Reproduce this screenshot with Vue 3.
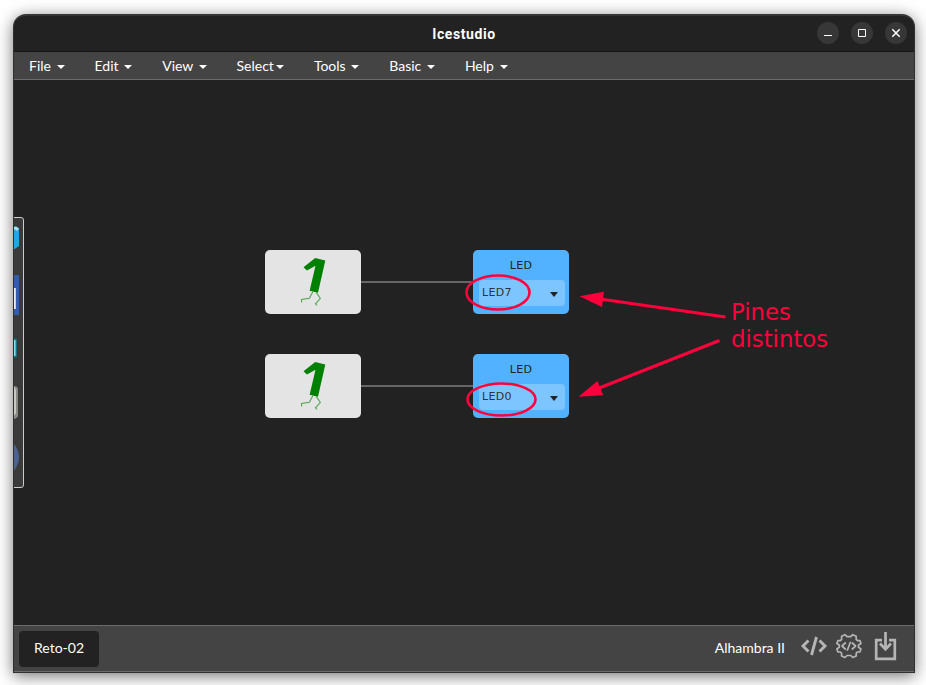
<script setup>
const menus = [
  { name: 'File' },
  { name: 'Edit' },
  { name: 'View' },
  { name: 'Select', tight: true },
  { name: 'Tools' },
  { name: 'Basic' },
  { name: 'Help' },
]
const rows = [
  { id: 'first', pin: 'LED7' },
  { id: 'second', pin: 'LED0' },
]
</script>

<template>
  <div class="desktop">
    <div class="window">
      <header class="titlebar">
        <span class="title">Icestudio</span>
        <div class="controls">
          <button class="control" aria-label="Minimize">
            <svg viewBox="0 0 22 22"><path d="M7 13.5h8" /></svg>
          </button>
          <button class="control" aria-label="Maximize">
            <svg viewBox="0 0 22 22"><path d="M7.500 7.500h7v7h-7z" /></svg>
          </button>
          <button class="control" aria-label="Close">
            <svg viewBox="0 0 22 22"><path class="cross" d="M7.300 7.300l7.400 7.400M14.700 7.300l-7.400 7.400" /></svg>
          </button>
        </div>
      </header>

      <nav class="menubar">
        <a v-for="m in menus" :key="m.name" class="menu" :class="{ tight: m.tight }">
          {{ m.name }}<span class="caret"></span>
        </a>
      </nav>

      <main class="canvas">
        <aside class="toolbox">
          <svg width="10" height="271" viewBox="0 0 10 271">
            <path class="panel" d="M0 .5H7Q9.500 .5 9.500 3V268Q9.500 270.500 7 270.500H0" />
            <path d="M0 10L2 9.500L5 11.500V29L0 32.500Z" fill="#25a5df" />
            <path d="M0 10L2 9.500L5 11.500L3 14L0 12Z" fill="#a0e3f7" />
            <path d="M0 58H5V98H0Z" fill="#315eae" />
            <path d="M0 71H1.800V92H0Z" fill="#eee" />
            <path d="M0 121L3 122V140L0 141Z" fill="#176c87" />
            <path d="M0 123H1.600V139H0Z" fill="#82dcf5" />
            <path d="M0 169Q4 169 4 173V198Q4 201 0 202Z" fill="#8b8b86" />
            <path d="M0 170Q2 171 2 175V196L0 199Z" fill="#c8c8c4" />
            <path d="M0 227Q10 240 0 254Z" fill="#4b6390" />
          </svg>
        </aside>

        <div v-for="row in rows" :key="row.id" class="circuit" :class="row.id">
          <div class="constant">
            <svg width="96" height="64" viewBox="0 0 96 64">
              <path fill="#008000" d="M38.500 17.300L50.200 8L60.300 10.400L53 42.700L44.600 40.700L50.500 15.700L42 20.500Z" />
              <path class="legs" d="M48 41.500L44.300 48.300L36.500 49.500L36.700 52.500M51.300 42.500L55.300 48.500L50.500 53.800L52 55.500" />
            </svg>
          </div>
          <div class="wire"></div>
          <div class="led">
            <span class="label">LED</span>
            <div class="select">
              <span>{{ row.pin }}</span>
              <span class="arrow"></span>
            </div>
          </div>
        </div>

        <svg class="marks" width="340" height="180" viewBox="460 260 340 180">
          <ellipse cx="498" cy="292.500" rx="31.500" ry="17" />
          <ellipse cx="501.500" cy="399.500" rx="34" ry="16" />
          <path d="M600 298.900L725.500 317" />
          <path d="M598 388.500L719.500 340.500" />
          <path class="head" d="M579.500 296.300L604 291.700L602 307Z" />
          <path class="head" d="M578.500 396.700L597.500 381L603.200 395.200Z" />
        </svg>
        <p class="note">Pines<br />distintos</p>
      </main>

      <footer class="statusbar">
        <div class="tab">Reto-02</div>
        <div class="board">
          <span>Alhambra II</span>
          <svg class="icons" width="100" height="36" viewBox="798 629 100 36">
            <g class="code">
              <path d="M808.500 640.500L803 646L808.500 651.500M819.500 640.500L825 646L819.500 651.500M816.500 637L811.500 655" />
            </g>
            <g class="gear">
              <path d="M845 634.700L847 636.700H850.800L852.800 634.700L856.200 636.300V639.300L857.500 640.700H860L861 643.500L858.500 645V647.200L861 649L859.800 652H857.300L856.200 653.300V656L852.800 657.500L850.800 655.500H847L845 657.500L841.600 656V653.300L840.400 652H838L836.800 649L839.300 647.200V645L836.800 643.500L838 640.700H840.300L841.600 639.300V636.300Z" />
              <path d="M845.800 642.500L842 646L845.800 649.500M851.800 642.500L855.600 646L851.800 649.500M850.500 641.700L847.200 650.700" />
            </g>
            <g class="download">
              <path d="M882 640.200H876.200V658.800H894.800V640.200H889" />
              <path d="M885.500 632V649M880 643.500L885.500 649.200L891 643.500" />
            </g>
          </svg>
        </div>
      </footer>
    </div>
  </div>
</template>

<style>
body {
  margin: 0;
  background: #fff;
}
</style>

<style scoped>
.desktop {
  box-sizing: border-box;
  width: 926px;
  height: 685px;
  padding: 14px 11px 12px 13px;
  overflow: hidden;
  background: #fff;
}
.window {
  box-sizing: border-box;
  display: flex;
  flex-direction: column;
  width: 902px;
  height: 659px;
  border: 1px solid #303030;
  border-top: 2px solid #353535;
  border-radius: 13px 13px 0 0;
  overflow: hidden;
  background: #222;
  box-shadow: 0 3px 16px rgba(0, 0, 0, 0.55);
  color: #fff;
  font: 14px/20px Lato, sans-serif;
}
.titlebar {
  box-sizing: border-box;
  flex: none;
  display: grid;
  grid-template-columns: 1fr auto 1fr;
  align-items: center;
  height: 36px;
  padding: 0 7px 1px 0;
  border-bottom: 1px solid #151515;
}
.title {
  grid-column: 2;
  padding: 2px 0 0 7px;
  font: 700 14px/20px Roboto, sans-serif;
  letter-spacing: 0.6px;
}
.controls {
  display: flex;
  justify-content: flex-end;
  gap: 12px;
}
.control {
  width: 22px;
  height: 22px;
  padding: 0;
  border: 0;
  border-radius: 50%;
  background: #373737;
}
.control svg {
  display: block;
  width: 22px;
  height: 22px;
  fill: none;
  stroke: #fff;
}
.control .cross {
  stroke-width: 1.5;
}
.menubar {
  flex: none;
  display: flex;
  height: 27px;
  border-bottom: 1px solid #6b6b6b;
  background: #444;
}
.menu {
  display: flex;
  align-items: center;
  gap: 5.6px;
  padding: 0 15px;
  height: 28px;
}
.menu.tight {
  gap: 2px;
  padding-left: 14.6px;
}
.caret {
  margin-top: 2px;
  border: 4px solid transparent;
  border-top-color: #fff;
  border-bottom: 0;
}
.canvas {
  position: relative;
  flex: 1;
}
.toolbox {
  position: absolute;
  left: 0;
  top: 137px;
}
.toolbox svg {
  display: block;
}
.panel {
  fill: #3a3a3a;
  stroke: #ccc;
}
.circuit {
  position: absolute;
  left: 251px;
  display: flex;
}
.circuit.first {
  top: 170px;
}
.circuit.second {
  top: 274px;
}
.constant {
  width: 96px;
  height: 64px;
  border-radius: 5px;
  background: #e4e4e4;
}
.constant svg {
  display: block;
}
.legs {
  fill: none;
  stroke: #4fa64f;
  stroke-width: 1.1;
}
.wire {
  width: 112px;
  height: 2px;
  margin-top: 31px;
  background: #666;
}
.led {
  box-sizing: border-box;
  display: flex;
  flex-direction: column;
  width: 96px;
  height: 64px;
  padding: 6px 4px 8px 6px;
  border-radius: 5px;
  background: #52b2ff;
  color: #222;
  font: 11px/20px "DejaVu Sans", sans-serif;
  letter-spacing: 0.3px;
}
.label {
  height: 24px;
  padding-right: 2px;
  text-align: center;
}
.select {
  box-sizing: border-box;
  display: flex;
  align-items: center;
  justify-content: space-between;
  height: 26px;
  padding: 0 7px 0 3px;
  border-radius: 4px;
  background: #7cc5ff;
  color: #333;
}
.arrow {
  margin-top: 3px;
  border: 4px solid transparent;
  border-top: 5px solid #222;
  border-bottom: 0;
}
.marks {
  position: absolute;
  left: 446px;
  top: 180px;
  fill: none;
  stroke: #ff003c;
  stroke-width: 2.6;
}
.marks path {
  stroke-width: 3;
}
.marks .head {
  fill: #ff003c;
  stroke: none;
}
.note {
  position: absolute;
  left: 717px;
  top: 219px;
  margin: 0;
  color: #ff003c;
  font: 22.8px/27px "DejaVu Sans", sans-serif;
}
.statusbar {
  box-sizing: border-box;
  flex: none;
  display: flex;
  align-items: center;
  justify-content: space-between;
  height: 47px;
  padding: 0 16px 0 5px;
  border-top: 1px solid #6b6b6b;
  border-bottom: 1px solid #6b6b6b;
  background: #444;
}
.tab {
  width: 80px;
  height: 36px;
  border-radius: 4px;
  background: #222;
  line-height: 34px;
  text-align: center;
}
.board {
  display: flex;
  align-items: center;
  gap: 13px;
  padding-bottom: 3px;
}
.board span {
  padding-top: 1px;
}
.icons {
  display: block;
  fill: none;
  stroke: #b5b5b5;
}
.code {
  stroke-width: 2.9;
}
.gear {
  stroke-width: 1.7;
  stroke-linejoin: round;
}
.download {
  stroke-width: 2.7;
}
</style>
